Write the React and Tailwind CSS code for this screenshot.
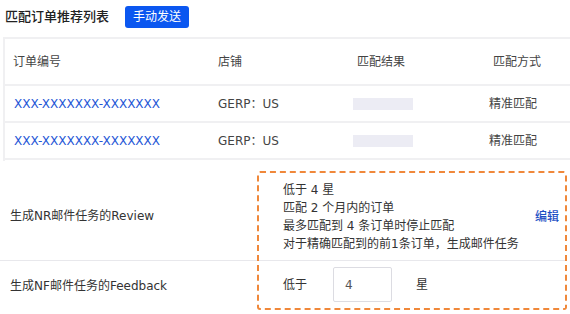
export default function App() {
    const rows = [
        { id: "XXX-XXXXXXX-XXXXXXX", shop: "GERP：US", mode: "精准匹配" },
        { id: "XXX-XXXXXXX-XXXXXXX", shop: "GERP：US", mode: "精准匹配" },
    ]

    return (
        <div
            className="w-[570px] h-[314px] overflow-hidden bg-white text-[12px] text-[#333]"
            style={{ fontFamily: '"DejaVu Sans", "Noto Sans CJK SC", sans-serif' }}
        >
            {/* header */}
            <div className="flex items-center h-[33px] pl-[5px] pt-[1px]">
                <span className="text-[13px] text-[#222] font-medium">匹配订单推荐列表</span>
                <button className="ml-[16px] h-[22px] w-[64px] rounded-[3px] bg-[#0b57f0] text-white text-[12px] leading-none">
                    手动发送
                </button>
            </div>

            {/* table */}
            <div className="mt-[4px] ml-[3px] border-l-2 border-t-2 border-[#f0f0f2] h-[124px]">
                <div className="grid grid-cols-[205px_140px_128px_1fr] h-[47px] items-center border-b-2 border-[#f0f0f2] text-[#444]">
                    <span className="pl-[8px]">订单编号</span>
                    <span className="pl-[8px]">店铺</span>
                    <span className="pl-[7px]">匹配结果</span>
                    <span className="pl-[15px]">匹配方式</span>
                </div>
                {rows.map((r, i) => (
                    <div
                        key={i}
                        className="grid grid-cols-[205px_140px_128px_1fr] h-[37px] items-center border-b-2 border-[#f0f0f2]"
                    >
                        <span className="pl-[9px] text-[#2456d6]">{r.id}</span>
                        <span className="pl-[8px] text-[#444]">{r.shop}</span>
                        <span className="pl-[3px]">
                            <span className="block w-[60px] h-[12px] bg-[#ececf4]"></span>
                        </span>
                        <span className="pl-[11px] text-[#444]">{r.mode}</span>
                    </div>
                ))}
            </div>

            {/* rules */}
            <div className="mt-[10px] flex">
                <div className="w-[257px] flex flex-col">
                    <div className="h-[90px] flex items-center pl-[10px] border-b border-[#e8e8ec]">
                        生成NR邮件任务的Review
                    </div>
                    <div className="h-[49px] flex items-center pl-[10px]">
                        生成NF邮件任务的Feedback
                    </div>
                </div>
                <div className="w-[310px] border-2 border-dashed border-[#f0883a] rounded-[3px] flex flex-col">
                    <div className="h-[88px] flex items-center justify-between pl-[24px] pr-[6px] border-b border-[#e8e8ec]">
                        <div className="leading-[18px] pt-[1px]">
                            <p>低于 4 星</p>
                            <p>匹配 2 个月内的订单</p>
                            <p>最多匹配到 4 条订单时停止匹配</p>
                            <p>对于精确匹配到的前1条订单，生成邮件任务</p>
                        </div>
                        <span className="text-[#1d4fc4] font-medium">编辑</span>
                    </div>
                    <div className="flex-1 flex items-center pl-[24px]">
                        <span>低于</span>
                        <div className="ml-[26px] w-[59px] h-[35px] border border-[#dcdce2] rounded-[2px] flex items-center pl-[11px] text-[#555]">
                            4
                        </div>
                        <span className="ml-[24px]">星</span>
                    </div>
                </div>
            </div>
        </div>
    )
}
